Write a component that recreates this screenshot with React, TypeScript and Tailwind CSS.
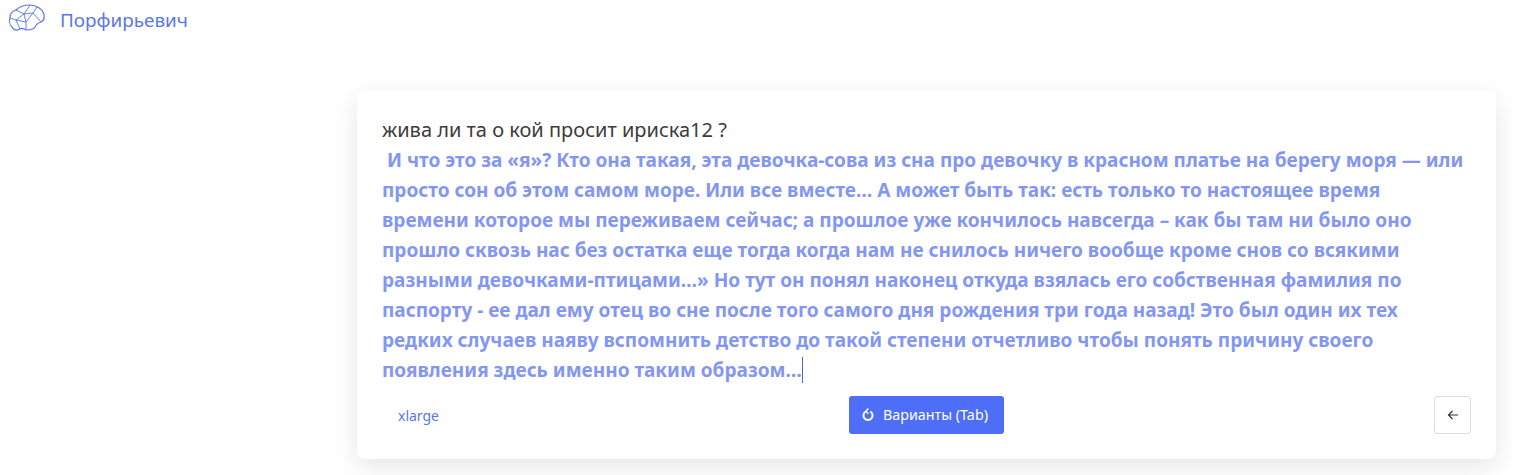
const font = { fontFamily: '"Noto Sans", "Open Sans", sans-serif' }

function BrainLogo() {
  return (
    <svg viewBox="8 4 38 28" className="h-[28px] w-[38px]" fill="none" stroke="#5a76e8" strokeWidth="1.2" strokeLinejoin="round">
      <path d="M10 18C9 14 13 11 16 10C19 7 25 5 30 5C36 5 43 9 44 15C44.5 18 43 21 41 22C38 23 36 24 35 27C33 30 29 30 26 30C24 29 22 27 20 29C17 31 13 30 12 27C10 25 9 21 10 18Z" />
      <path d="M16 10L24 14L30 5M24 14L33 13L37 7M33 13L41 22M33 13L26 22L24 14M24 14L16 20L10 18M16 20L26 22L26 30M16 20L20 29" strokeWidth="0.9" />
    </svg>
  )
}

export default function App() {
  return (
    <div className="h-[475px] w-full overflow-hidden bg-white" style={font}>
      <header className="flex h-[40px] items-start pl-[8px] pt-[4px]">
        <BrainLogo />
        <span className="ml-[14px] mt-[3px] text-[18.9px] leading-[26px] text-[#5a76e8]">Порфирьевич</span>
      </header>
      <main className="ml-[357px] mt-[50px] h-[369px] w-[1139px] rounded-lg bg-white px-[25px] pt-[25px] shadow-[0_8px_24px_rgba(0,0,0,0.1)]">
        <div className="text-[19.05px] leading-[30px] text-[#3c3c3c]">
          <div className="text-[20px]">жива ли та о кой просит ириска12 ?</div>
          <div className="font-bold text-[#8397f2]">
            <div>&nbsp;И что это за «я»? Кто она такая, эта девочка-сова из сна про девочку в красном платье на берегу моря — или</div>
            <div>просто сон об этом самом море. Или все вместе… А может быть так: есть только то настоящее время</div>
            <div>времени которое мы переживаем сейчас; а прошлое уже кончилось навсегда – как бы там ни было оно</div>
            <div>прошло сквозь нас без остатка еще тогда когда нам не снилось ничего вообще кроме снов со всякими</div>
            <div>разными девочками-птицами…» Но тут он понял наконец откуда взялась его собственная фамилия по</div>
            <div>паспорту - ее дал ему отец во сне после того самого дня рождения три года назад! Это был один их тех</div>
            <div>редких случаев наяву вспомнить детство до такой степени отчетливо чтобы понять причину своего</div>
            <div>
              <span className="border-r border-[#4a63d8]">появления здесь именно таким образом…</span>
            </div>
          </div>
        </div>
        <div className="mt-[11px] flex h-[38px] items-center justify-between">
          <div className="w-[200px] pl-[16px] text-[14px] text-[#5a76e8]">xlarge</div>
          <button type="button" className="flex h-[38px] w-[155px] items-center justify-center gap-[8px] rounded-[3px] bg-[#4f6ef7] pr-[4px] text-[14.3px] text-white">
            <svg viewBox="0 0 16 16" className="h-[14px] w-[14px]" fill="none" stroke="white" strokeWidth="2.2">
              <path d="M5.5 4A5.2 5.2 0 1 0 10.5 4" />
              <path d="M8.5 0.5L5.5 3.8L8.5 6.5" strokeWidth="1.6" />
            </svg>
            Варианты (Tab)
          </button>
          <div className="flex w-[200px] justify-end">
            <button type="button" className="flex h-[38px] w-[37px] items-center justify-center rounded-[3px] border border-[#dcdcdc] bg-white text-[#333]">
              <svg viewBox="0 0 12 12" className="h-[12px] w-[12px]" fill="none" stroke="currentColor" strokeWidth="1.2">
                <path d="M11 6H1.5M5.5 2L1.5 6L5.5 10" />
              </svg>
            </button>
          </div>
        </div>
      </main>
    </div>
  )
}
